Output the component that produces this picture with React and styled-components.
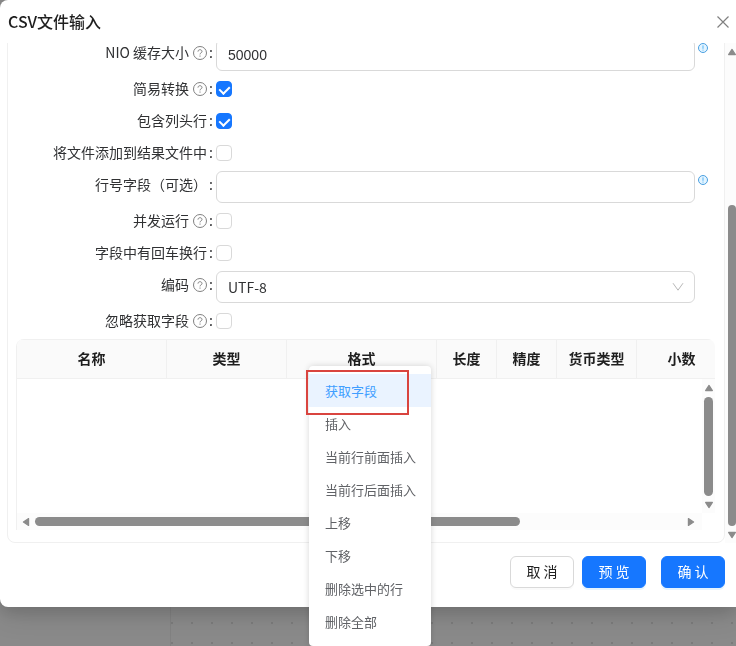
import React, { useState } from "react";
import styled, { createGlobalStyle } from "styled-components";

const GlobalStyle = createGlobalStyle`
    * {
        box-sizing: border-box;
    }

    body {
        margin: 0;
        overflow: hidden;
        font-family: "Noto Sans CJK SC", sans-serif;
        font-size: 14px;
        color: #303133;
    }

    button, input, select {
        font: inherit;
        color: inherit;
    }
`;

const Page = styled.div`
    display: flex;
    flex-direction: column;
    height: 100vh;
    background-color: #8a8a8a;
`;

const Backdrop = styled.div`
    position: fixed;
    inset: 0;
    display: flex;
`;

const Side = styled.div`
    width: 171px;
    border-right: 1px solid #828282;
`;

const Canvas = styled.div`
    flex: 1;
    background-image: radial-gradient(circle at 1px 1px, #7b7b7b 1px, transparent 1px);
    background-size: 20px 20px;
    background-position: 0 2px;
`;

const Dialog = styled.section`
    position: relative;
    background-color: #fff;
    border-radius: 8px 0 0 8px;
    box-shadow: 0 6px 16px rgba(0, 0, 0, 0.12), 0 9px 28px rgba(0, 0, 0, 0.1);
`;

const Header = styled.header`
    display: flex;
    align-items: center;
    justify-content: space-between;
    height: 43px;
    padding: 0 7px 0 8px;
`;

const Title = styled.h1`
    margin: 0;
    padding-bottom: 2px;
    font-size: 16px;
    font-weight: 500;
    line-height: 24px;
    color: #1f1f1f;
`;

const CloseButton = styled.button`
    display: flex;
    padding: 0;
    border: none;
    background: none;
    color: #808080;
    cursor: pointer;
`;

const Body = styled.div`
    display: flex;
    height: 500px;
    overflow: hidden;
`;

const Content = styled.div`
    flex: 1;
    display: flex;
    flex-direction: column;
    justify-content: flex-end;
    min-width: 0;
    padding-left: 7px;
`;

const Panel = styled.form`
    flex-shrink: 0;
    padding: 12px 9px 12px 8px;
    border: 1px solid #f0f0f0;
    border-radius: 8px;
`;

const Row = styled.div`
    display: grid;
    grid-template-columns: 200px 1fr 20px;
    align-items: start;
`;

const Label = styled.label`
    display: flex;
    align-items: center;
    justify-content: flex-end;
    height: 32px;
    padding: 0 3px 2px 0;
    line-height: 20px;
    white-space: nowrap;
`;

const Help = styled.svg`
    margin: 2px 0 0 4px;
    color: #808080;
`;

const Colon = styled.span`
    margin-left: 2px;
`;

const Control = styled.div`
    position: relative;
    display: flex;
    align-items: center;
    min-height: 32px;
    padding: 2px 0;
`;

const TextInput = styled.input`
    width: 100%;
    height: 32px;
    padding: 0 11px;
    border: 1px solid #d9d9d9;
    border-radius: 6px;
    background-color: #fff;
    font-family: "Liberation Sans", "Noto Sans CJK SC", sans-serif;
    outline: none;
`;

const Select = styled.select`
    appearance: none;
    width: 100%;
    height: 32px;
    padding: 0 11px;
    border: 1px solid #d9d9d9;
    border-radius: 6px;
    background-color: #fff;
    outline: none;
`;

const Arrow = styled.svg`
    position: absolute;
    right: 11px;
    pointer-events: none;
    color: #b8b8b8;
`;

const Checkbox = styled.input`
    appearance: none;
    display: flex;
    justify-content: center;
    width: 16px;
    height: 16px;
    margin: 0;
    border: 1px solid #d9d9d9;
    border-radius: 4px;
    background-color: #fff;
    cursor: pointer;

    &:checked {
        border-color: #1677ff;
        background-color: #1677ff;
    }

    &:checked::after {
        content: "";
        width: 5px;
        height: 8px;
        margin-top: 2px;
        border: solid #fff;
        border-width: 0 2px 2px 0;
        transform: rotate(45deg);
    }
`;

const Info = styled.svg`
    margin: 6px 3px;
`;

const TableBox = styled.div`
    margin-top: 2px;
    overflow: hidden;
    border-left: 1px solid #f0f0f0;
    border-radius: 8px 8px 0 0;
`;

const TableHead = styled.div`
    overflow: hidden;
`;

const Table = styled.table`
    width: 710px;
    table-layout: fixed;
    border-spacing: 0;
`;

const Th = styled.th`
    width: ${(props) => props.width}px;
    height: 40px;
    padding: 0 0 2px;
    border: solid #f0f0f0;
    border-width: 1px 1px 1px 0;
    background-color: #fafafa;
    font-weight: 700;
    line-height: 20px;
    color: #1f1f1f;
`;

const Viewport = styled.div`
    display: grid;
    grid-template-columns: 1fr 13px;
    height: 151px;
`;

const Pane = styled.div`
    display: flex;
    flex-direction: column;
    justify-content: flex-end;
`;

const Track = styled.div`
    display: flex;
    align-items: center;
    gap: 5px;
    background-color: #fcfcfc;
`;

const HorizontalTrack = styled(Track)`
    height: 17px;
    padding: 0 7px 0 5px;
`;

const VerticalTrack = styled(Track)`
    flex-direction: column;
    margin-bottom: 17px;
    padding: 5px 0 4px;
`;

const PageTrack = styled(Track)`
    flex-direction: column;
    width: 11px;
    padding: 5px 0 4px 3px;
`;

const Rail = styled.div`
    flex: 1;
    display: flex;
    flex-direction: inherit;
    justify-content: ${(props) => (props.$end ? "flex-end" : "flex-start")};
`;

const Thumb = styled.div`
    width: ${(props) => props.$width || "9px"};
    height: ${(props) => props.$height || "9px"};
    border-radius: 5px;
    background-color: #8b8b8b;
`;

const Tip = styled.svg`
    flex-shrink: 0;
    color: #8b8b8b;
    transform: rotate(${(props) => props.$turn}deg);
`;

const Footer = styled.footer`
    display: flex;
    justify-content: flex-end;
    gap: 15px;
    padding: 13px 11px 19px;
`;

const ButtonGroup = styled.div`
    display: flex;
    gap: 8px;
`;

const Button = styled.button`
    min-width: 64px;
    height: 32px;
    padding: 0 15px 2px;
    border: 1px solid ${(props) => (props.$primary ? "#1677ff" : "#d9d9d9")};
    border-radius: 6px;
    background-color: ${(props) => (props.$primary ? "#1677ff" : "#fff")};
    color: ${(props) => (props.$primary ? "#fff" : "#1f1f1f")};
    box-shadow: 0 2px 0 ${(props) => (props.$primary ? "rgba(5, 145, 255, 0.1)" : "rgba(0, 0, 0, 0.02)")};
    line-height: 20px;
    white-space: nowrap;
    cursor: pointer;
`;

const Menu = styled.ul`
    position: absolute;
    top: 366px;
    left: 309px;
    width: 122px;
    margin: 0;
    padding: 8px 0;
    list-style: none;
    border-radius: 4px;
    background-color: #fff;
    box-shadow: 0 0 6px rgba(0, 0, 0, 0.16);
`;

const MenuItem = styled.li`
    position: relative;
`;

const MenuButton = styled.button`
    display: block;
    width: 100%;
    height: 33px;
    padding: 0 16px;
    border: none;
    background-color: ${(props) => (props.$active ? "#eaf3ff" : "transparent")};
    color: ${(props) => (props.$active ? "#409eff" : "#606266")};
    font-size: 13px;
    text-align: left;
    white-space: nowrap;
    cursor: pointer;
`;

const Marker = styled.span`
    position: absolute;
    top: -4px;
    left: -3px;
    width: 103px;
    height: 45px;
    border: 2px solid #d9443f;
    pointer-events: none;
`;

const columns = [
    { name: "名称", width: 150 },
    { name: "类型", width: 120 },
    { name: "格式", width: 150 },
    { name: "长度", width: 60 },
    { name: "精度", width: 60 },
    { name: "货币类型", width: 80 },
    { name: "小数", width: 90 },
];

const actions = [
    "获取字段",
    "插入",
    "当前行前面插入",
    "当前行后面插入",
    "上移",
    "下移",
    "删除选中的行",
    "删除全部",
];

const HelpIcon = () => (
    <Help width="14" height="14" viewBox="0 0 14 14" fill="none" stroke="currentColor">
        <circle cx="7" cy="7" r="6.5" />
        <path d="M5 5.6c0-1.2.9-1.9 2-1.9s2 .7 2 1.8c0 1.4-2 1.3-2 2.9" />
        <path d="M7 9.5v1.2" />
    </Help>
);

const InfoIcon = () => (
    <Info width="10" height="10" viewBox="0 0 10 10" fill="none">
        <circle cx="5" cy="5" r="4.5" fill="#e3f4ff" stroke="#4a9fe0" />
        <path d="M5 2.4v3.4M5 6.6v1" stroke="#55b4f5" />
    </Info>
);

const ScrollTip = ({ turn }) => (
    <Tip $turn={turn} width="8" height="8" viewBox="0 0 8 8">
        <path d="M4 1.4 7.4 6.6H.6z" fill="currentColor" stroke="currentColor" strokeWidth="1.2" strokeLinejoin="round" />
    </Tip>
);

const Field = ({ id, label, help, info, children }) => (
    <Row>
        <Label htmlFor={id}>
            {label}
            {help && <HelpIcon />}
            <Colon>:</Colon>
        </Label>
        <Control>{children}</Control>
        {info && <InfoIcon />}
    </Row>
);

const CheckField = ({ id, label, help, checked }) => (
    <Field id={id} label={label} help={help}>
        <Checkbox id={id} type="checkbox" defaultChecked={checked} />
    </Field>
);

const App = () => {
    const [active, setActive] = useState(0);

    return (
        <Page>
            <GlobalStyle />
            <Backdrop>
                <Side />
                <Canvas />
            </Backdrop>
            <Dialog role="dialog" aria-labelledby="title">
                <Header>
                    <Title id="title">CSV文件输入</Title>
                    <CloseButton type="button" aria-label="关闭">
                        <svg width="12" height="12" viewBox="0 0 12 12" fill="none" stroke="currentColor" strokeWidth="1.2">
                            <path d="M.5.5l11 11M11.5.5l-11 11" />
                        </svg>
                    </CloseButton>
                </Header>
                <Body>
                    <Content>
                        <Panel>
                            <Field id="buffer" label="NIO 缓存大小" help info>
                                <TextInput id="buffer" type="text" defaultValue="50000" />
                            </Field>
                            <CheckField id="lazy" label="简易转换" help checked />
                            <CheckField id="header" label="包含列头行" checked />
                            <CheckField id="addResult" label="将文件添加到结果文件中" />
                            <Field id="rowNum" label="行号字段（可选）" info>
                                <TextInput id="rowNum" type="text" />
                            </Field>
                            <CheckField id="parallel" label="并发运行" help />
                            <CheckField id="newline" label="字段中有回车换行" />
                            <Field id="encoding" label="编码" help>
                                <Select id="encoding" defaultValue="UTF-8">
                                    <option>UTF-8</option>
                                </Select>
                                <Arrow width="12" height="12" viewBox="0 0 12 12" fill="none" stroke="currentColor">
                                    <path d="M1 2.2l5 7 5-7" />
                                </Arrow>
                            </Field>
                            <CheckField id="ignore" label="忽略获取字段" help />
                            <TableBox>
                                <TableHead>
                                    <Table>
                                        <thead>
                                            <tr>
                                                {columns.map((col) => (
                                                    <Th key={col.name} width={col.width}>
                                                        {col.name}
                                                    </Th>
                                                ))}
                                            </tr>
                                        </thead>
                                    </Table>
                                </TableHead>
                                <Viewport>
                                    <Pane>
                                        <HorizontalTrack>
                                            <ScrollTip turn={-90} />
                                            <Rail>
                                                <Thumb $width="75%" />
                                            </Rail>
                                            <ScrollTip turn={90} />
                                        </HorizontalTrack>
                                    </Pane>
                                    <VerticalTrack>
                                        <ScrollTip turn={0} />
                                        <Rail>
                                            <Thumb $height="100%" />
                                        </Rail>
                                        <ScrollTip turn={180} />
                                    </VerticalTrack>
                                </Viewport>
                            </TableBox>
                        </Panel>
                    </Content>
                    <PageTrack>
                        <ScrollTip turn={0} />
                        <Rail $end>
                            <Thumb $width="8px" $height="69%" />
                        </Rail>
                        <ScrollTip turn={180} />
                    </PageTrack>
                </Body>
                <Footer>
                    <ButtonGroup>
                        <Button type="button">取 消</Button>
                        <Button type="button" $primary>预 览</Button>
                    </ButtonGroup>
                    <Button type="button" $primary>确 认</Button>
                </Footer>
                <Menu>
                    {actions.map((item, i) => (
                        <MenuItem key={item}>
                            <MenuButton type="button" $active={i === active} onClick={() => setActive(i)}>
                                {item}
                            </MenuButton>
                            {i === 0 && <Marker />}
                        </MenuItem>
                    ))}
                </Menu>
            </Dialog>
        </Page>
    );
};

export default App;
